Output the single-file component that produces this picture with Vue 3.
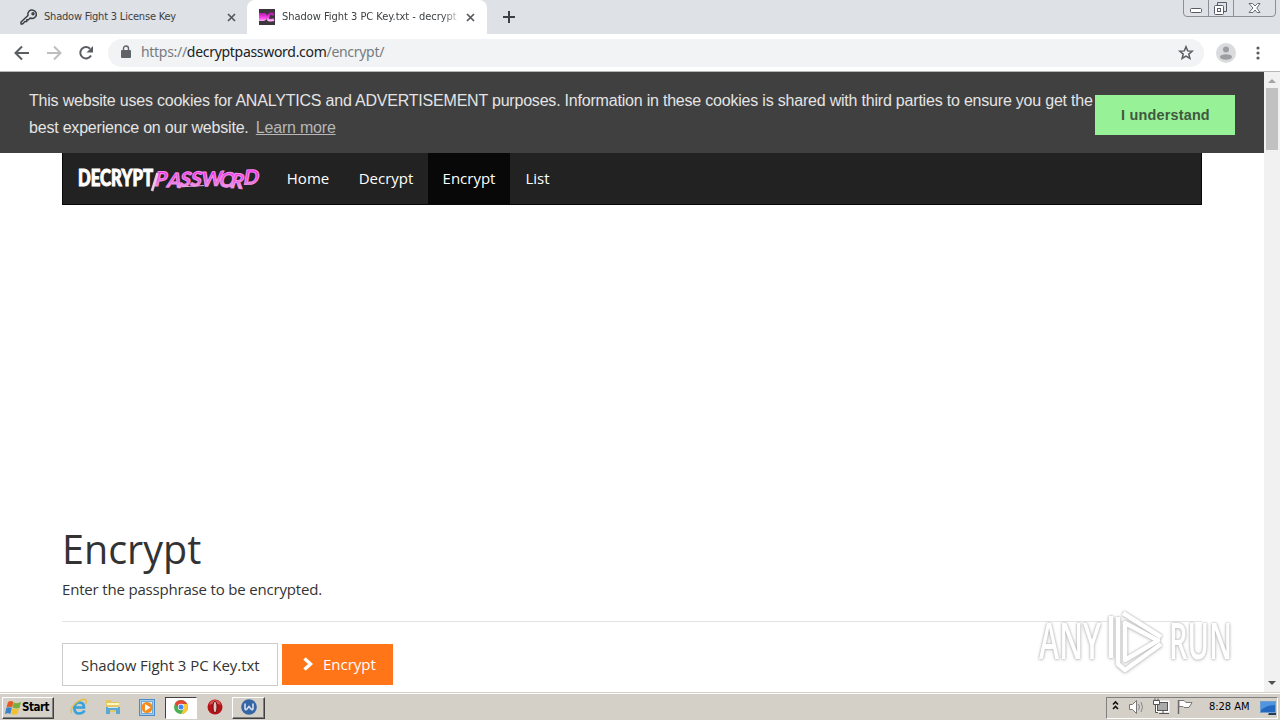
<script setup>
import { ref } from "vue";

const navItems = ["Home", "Decrypt", "Encrypt", "List"];
const active = ref("Encrypt");
const passphrase = ref("Shadow Fight 3 PC Key.txt");
</script>

<template>
  <div class="screen">
    <header class="tabstrip">
      <div class="tab first">
        <svg class="key" width="18" height="18" viewBox="0 0 18 18" fill="none" stroke="#3c4043" stroke-width="1.5">
          <path d="M8 7.5C7 4 10 1.500 13 2.200C16.500 3 17.500 7 15 9.200C13.500 10.600 11.500 10.700 10.200 10L8.500 11.700H6.800V13.500H5L2.500 16H1V14Z" stroke-linejoin="round" />
          <circle cx="13" cy="5.800" r="1" />
        </svg>
        <span class="tab-title t1">Shadow Fight 3 License Key</span>
        <svg class="close" width="9" height="9" viewBox="0 0 9 9"><path d="M1 1L8 8M8 1L1 8" stroke="#55585c" stroke-width="1.700" /></svg>
      </div>
      <div class="tab current">
        <svg class="fav" width="16" height="16" viewBox="0 0 16 16">
          <defs><linearGradient id="pink" x2="0" y2="1"><stop offset="0" stop-color="#b51bab" /><stop offset=".6" stop-color="#ff43ed" /><stop offset="1" stop-color="#ffb0f5" /></linearGradient></defs>
          <rect width="16" height="16" fill="#3d363d" />
          <path d="M0 4H5Q8 4 8 7.500T5 12H0Z" fill="url(#pink)" />
          <path d="M15 5.500Q10 3 9 8T15 10.500" fill="none" stroke="url(#pink)" stroke-width="2.600" />
        </svg>
        <span class="tab-title t2">Shadow Fight 3 PC Key.txt - decrypt</span>
        <svg class="close" width="9" height="9" viewBox="0 0 9 9"><path d="M1 1L8 8M8 1L1 8" stroke="#55585c" stroke-width="1.700" /></svg>
      </div>
      <svg class="plus" width="12" height="12" viewBox="0 0 12 12"><path d="M6 0V12M0 6H12" stroke="#3c4043" stroke-width="2" /></svg>
      <svg class="window-buttons" width="94" height="18" viewBox="0 0 94 18" fill="none">
        <path d="M.5 0V13Q.5 16.500 4 16.500H89Q92.500 16.500 92.500 13V0M25.500 0V16M50.500 0V16" stroke="#8b8f98" />
        <rect x="7.500" y="8.500" width="11" height="4" rx="1" fill="#fff" stroke="#565b66" />
        <path d="M34.500 5V2.500H43.500V11.500H41" stroke="#565b66" />
        <rect x="31.500" y="5.500" width="9" height="9" rx="1" fill="#fff" stroke="#565b66" />
        <rect x="34.500" y="8.500" width="3" height="3" stroke="#565b66" />
        <path d="M66 3.500H69.500L72 6L74.500 3.500H77L73.800 8L77 12.500H74L72 10L70 12.500H66L70 8Z" fill="#fff" stroke="#686d77" />
      </svg>
    </header>

    <div class="toolbar">
      <svg class="nav-icon" width="108" height="36" viewBox="0 0 108 36" fill="none" stroke-width="2">
        <path d="M29 18H16M22 11.500L15.500 18L22 24.500" stroke="#5a5d61" />
        <path d="M47 18H60M54 11.500L60.500 18L54 24.500" stroke="#bcbec0" />
        <path d="M91 20.500A5.700 5.700 0 1 1 90 13.700" stroke="#5a5d61" />
        <path d="M93 11V17.500H86.500Z" fill="#5a5d61" />
      </svg>
      <div class="omnibox">
        <svg class="lock" width="10" height="13" viewBox="0 0 10 13"><path d="M2.500 6V3.500A2.500 2.500 0 0 1 7.500 3.500V6" fill="none" stroke="#5f6368" stroke-width="1.400" /><rect y="5" width="10" height="8" rx="1" fill="#5f6368" /></svg>
        <span class="url">https://<b>decryptpassword.com</b>/encrypt/</span>
        <svg class="star" width="16" height="16" viewBox="0 0 16 16"><path d="M8 1.800L9.700 5.900L14.200 6.200L10.800 9.100L11.900 13.500L8 11.100L4.100 13.500L5.200 9.100L1.800 6.200L6.300 5.900Z" fill="none" stroke="#5a5d61" stroke-width="1.500" /></svg>
      </div>
      <svg class="profile" width="20" height="20" viewBox="0 0 20 20"><circle cx="10" cy="10" r="10" fill="#dadbdd" /><circle cx="10" cy="6.500" r="3" fill="#9b9da0" /><ellipse cx="10" cy="14" rx="6" ry="2.700" fill="#9b9da0" /></svg>
      <svg class="dots" width="4" height="14" viewBox="0 0 4 14" fill="#5a5d61"><circle cx="2" cy="2" r="1.600" /><circle cx="2" cy="7" r="1.600" /><circle cx="2" cy="12" r="1.600" /></svg>
    </div>

    <div class="viewport">
      <main class="page">
        <div class="cookies">
          <p>
            <span class="line l1">This website uses cookies for ANALYTICS and ADVERTISEMENT purposes. Information in these cookies is shared with third parties to ensure you get the</span>
            <span class="line l2">best experience on our website. <a>Learn more</a></span>
          </p>
          <button class="accept">I understand</button>
        </div>
        <nav class="navbar">
          <svg class="logo" width="182" height="28" viewBox="0 0 182 28">
            <defs><linearGradient id="neon" x2="0" y2="1"><stop offset=".25" stop-color="#ff24ef" /><stop offset=".6" stop-color="#ea5fdf" /><stop offset="1" stop-color="#eee" /></linearGradient></defs>
            <text x="1" y="21" textLength="75" lengthAdjust="spacingAndGlyphs" class="logo-a">DECRYPT</text>
            <text x="81 94 106 117 128 146 157 170" y="21 22 21 21.500 21.500 22 22.500 19.500" class="logo-b" transform="skewX(-12)" rotate="0 3 3 0 -3 0 5 -2">PASSWORD</text>
            <path d="M80.500 8L75 26" stroke="#e9c5e5" stroke-width="2.600" />
            <path d="M101 22L127 20.500" stroke="#e9a5e3" stroke-width="1.200" />
          </svg>
          <a v-for="item in navItems" :key="item" :class="['nav-link', item.toLowerCase(), { active: item === active }]" @click="active = item">{{ item }}</a>
        </nav>
        <section class="content">
          <h1>Encrypt</h1>
          <p class="lead">Enter the passphrase to be encrypted.</p>
          <hr />
          <form class="form" @submit.prevent>
            <input v-model="passphrase" type="text" spellcheck="false" />
            <button class="submit">
              <svg width="12" height="14" viewBox="0 0 12 14"><path d="M2.500 1.500L8.500 7L2.500 12.500" fill="none" stroke="#fff" stroke-width="3.400" /></svg>
              <span>Encrypt</span>
            </button>
          </form>
        </section>
      </main>
      <div class="scrollbar">
        <svg width="16" height="16" viewBox="0 0 16 16"><path d="M4 11L8 7L12 11Z" fill="#a3a3a3" /></svg>
        <div class="thumb"></div>
        <svg class="down" width="16" height="16" viewBox="0 0 16 16"><path d="M4 5L8 9L12 5Z" fill="#505050" /></svg>
      </div>
      <svg class="watermark" width="204" height="72" viewBox="0 0 204 72">
        <g class="mark">
          <text x="5" y="54" textLength="62" lengthAdjust="spacingAndGlyphs">ANY</text>
          <text x="135" y="54" textLength="63" lengthAdjust="spacingAndGlyphs">RUN</text>
          <path d="M77 11V53" />
          <path d="M84 12V59L91 65L127 39" />
          <path d="M89 8L127 32" />
          <path d="M91 18V55L124 35.500Z" />
        </g>
      </svg>
    </div>

    <footer class="taskbar">
      <button class="start">
        <svg width="17" height="16" viewBox="0 0 17 16">
          <path d="M3 2Q6 0 8.500 2L7 7.500Q4.500 6 1.500 7.500Z" fill="#e65a25" />
          <path d="M8.800 2.500Q12.500 4 16 2L14.500 8Q11 9 7.500 7.500Z" fill="#78ae3b" />
          <path d="M1.200 8Q4 6.500 6.800 8L5.300 14Q3 12.500 0 14Z" fill="#3a83c8" />
          <path d="M7.400 8.300Q10.500 10 14 8.500L12.500 14Q9.500 15.500 6.100 14Z" fill="#f5bf32" />
        </svg>
        <span>Start</span>
      </button>
      <div class="quick ie">
        <svg width="18" height="18" viewBox="0 0 18 18" fill="none"><path d="M4.500 9.500H14Q14 4.500 9.500 4.500T4.300 10Q4.500 15.500 9 15.500Q13 15.500 14.500 12.500" stroke="#36a3dc" stroke-width="2.700" /><path d="M2 15C-2 12 7 1 15 1.500C17.500 2 16 5 15.500 6" stroke="#e5be43" stroke-width="1.300" /></svg>
      </div>
      <div class="quick">
        <svg width="16" height="16" viewBox="0 0 16 16"><path d="M1 1H6L7 3H14V13H1Z" fill="#e4c765" /><path d="M2 4H14V6H2Z" fill="#fff6bf" /><path d="M1 8H15V15H11V11H5V15H1Z" fill="#5ba8d2" /><path d="M3 8H13V9H3Z" fill="#c6eafa" /></svg>
      </div>
      <div class="quick">
        <svg width="16" height="17" viewBox="0 0 16 17"><rect x=".5" y=".5" width="15" height="16" fill="#a8cbea" stroke="#4a8ccb" /><rect x="2.500" y="2.500" width="11" height="12" fill="#dcecf7" stroke="#74aad7" /><circle cx="8" cy="8.500" r="5.500" fill="#f68b1e" /><path d="M6 5L11.500 8.500L6 12Z" fill="#fff" /></svg>
      </div>
      <div class="quick pressed">
        <svg width="14" height="14" viewBox="0 0 14 14"><circle cx="7" cy="7" r="7" fill="#4caf50" /><path d="M1 3.500A7 7 0 0 1 13.200 4H7L4.500 8.500Z" fill="#e64435" /><path d="M7 4H13.200A7 7 0 0 1 7 14L10 8.500Z" fill="#fcc934" /><circle cx="7" cy="7" r="3.200" fill="#fff" /><circle cx="7" cy="7" r="2.500" fill="#4285f4" /></svg>
      </div>
      <div class="quick opera">
        <svg width="16" height="16" viewBox="0 0 16 16"><ellipse cx="8" cy="8" rx="7.500" ry="7.500" fill="#b51219" /><path d="M2 6Q3 1 8 1T14 6Q8 3 2 6" fill="#d84d4d" /><ellipse cx="8" cy="8" rx="2" ry="5.800" fill="#d8c8c4" stroke="#790b0e" /></svg>
      </div>
      <div class="quick raised">
        <svg width="16" height="16" viewBox="0 0 16 16"><circle cx="8" cy="8" r="7.800" fill="#3465a4" /><path d="M4 4.500V9.500Q4 11 5.500 10.500L8 7.500L10.500 10.500Q12 11 12 9.500V4.500" fill="none" stroke="#d5e0ee" stroke-width="1.600" /></svg>
      </div>
      <div class="tray">
        <svg class="tray-icons" width="88" height="20" viewBox="0 0 88 20" fill="none">
          <path d="M6 7.500L8.500 5L11 7.500M6 12L8.500 9.500L11 12" stroke="#111" stroke-width="1.600" />
          <path d="M22.500 7.500H25.500L29.500 3.500V16.500L25.500 12.500H22.500Z" fill="#fff" stroke="#777" />
          <path d="M31.500 7Q33.500 10 31.500 13M34 5Q37 10 34 15" stroke="#888" />
          <rect x="50" y="5" width="11" height="9" fill="#aaa" stroke="#fff" stroke-width="3" />
          <rect x="50.500" y="5.500" width="10" height="8" fill="#aaa" stroke="#555" />
          <path d="M52 16.500H62M56 14V16M48.500 8V15.500H51" stroke="#555" />
          <path d="M46.500 3.500H52.500V7.500H46.500ZM48 1.500V3.500M51 1.500V3.500" fill="#fff" stroke="#555" />
          <path d="M71.500 17V3" stroke="#666" stroke-width="1.400" />
          <path d="M72 3.500H77L79 5.500H85L82 10.500H77L76 9.500H72Z" fill="#fff" stroke="#777" />
        </svg>
        <span class="clock">8:28 AM</span>
        <svg class="desktop" width="16" height="14" viewBox="0 0 16 14"><rect x=".5" y=".5" width="15" height="11" fill="#2168be" stroke="#6e9fcf" /><path d="M1 1H15V4Q7 4 1 9Z" fill="#4f95df" /><path d="M9 12H16V14H8Z" fill="#243c59" /></svg>
      </div>
    </footer>
  </div>
</template>

<style>
body {
  margin: 0;
  overflow: hidden;
}
</style>

<style scoped>
.screen {
  width: 1280px;
  height: 720px;
  display: flex;
  flex-direction: column;
  background: #fff;
  font-family: "Open Sans", sans-serif;
}
.screen * {
  box-sizing: border-box;
}
svg {
  display: block;
  flex: none;
  overflow: visible;
}
button {
  border: 0;
  font: inherit;
}
.tabstrip {
  height: 34px;
  flex: none;
  background: #dee1e6;
  display: flex;
  align-items: center;
}
.tab {
  height: 34px;
  display: flex;
  align-items: center;
  flex: none;
}
.first {
  width: 247px;
  padding-left: 20px;
}
.current {
  width: 240px;
  background: #fff;
  border-radius: 8px 8px 0 0;
  padding-left: 12px;
}
.tab-title {
  font: 11px/16px "DejaVu Sans Condensed", "DejaVu Sans", sans-serif;
  color: #3c4043;
  white-space: nowrap;
}
.t1 {
  margin-left: 6px;
  width: 183px;
  letter-spacing: -0.2px;
}
.t2 {
  margin-left: 7px;
  width: 176px;
  letter-spacing: -0.03px;
  mask-image: linear-gradient(90deg, #000 160px, transparent 180px);
}
.current .close {
  margin-left: 8px;
}
.plus {
  margin-left: 16px;
}
.window-buttons {
  margin: 0 3px auto auto;
}
.toolbar {
  height: 38px;
  flex: none;
  display: flex;
  align-items: center;
  border-bottom: 1px solid #b5b6b6;
}
.omnibox {
  width: 1096px;
  height: 28px;
  border-radius: 14px;
  background: #f1f3f4;
  display: flex;
  align-items: center;
  padding: 0 10px 0 13px;
}
.lock {
  margin-top: -2px;
}
.url {
  margin: -2px 0 0 10px;
  font: 14px/20px "Noto Sans", sans-serif;
  letter-spacing: -0.3px;
  color: #777b80;
}
.url b {
  font-weight: normal;
  color: #202124;
}
.star {
  margin-left: auto;
}
.profile {
  margin-left: 12px;
}
.dots {
  margin-left: 20px;
}
.viewport {
  height: 620px;
  flex: none;
  display: flex;
  position: relative;
}
.page {
  width: 1264px;
}
.cookies {
  height: 81px;
  background: #404040;
  display: flex;
  align-items: center;
  font-family: "Liberation Sans", Arial, sans-serif;
}
.cookies p {
  width: 1066px;
  margin: 2px 0 0 29px;
  color: #e4e4e4;
  font-size: 16px;
  line-height: 27px;
  letter-spacing: -0.205px;
}
.line {
  display: block;
  white-space: nowrap;
}
.line a {
  margin-left: 3px;
  color: #b7b7b7;
  text-decoration: underline;
}
.accept {
  width: 140px;
  height: 40px;
  margin-top: 5px;
  padding: 0 0 0 1px;
  background: #97f197;
  color: #40583f;
  font: bold 14.4px "Liberation Sans", Arial, sans-serif;
  letter-spacing: 0.2px;
}
.navbar {
  margin-left: 62px;
  width: 1140px;
  height: 52px;
  background: #222;
  border: 1px solid #080808;
  border-top: 0;
  display: flex;
  align-items: center;
  padding-left: 14px;
}
.logo {
  margin-right: 13px;
}
.logo-a {
  font: 900 22px Lato, sans-serif;
  fill: #fff;
  stroke: #fff;
  stroke-width: 1px;
}
.logo-b {
  font: bold 20px Lato, sans-serif;
  fill: url(#neon);
  stroke: #f08ae8;
  stroke-width: 1.1px;
}
.nav-link {
  height: 51px;
  line-height: 51px;
  font-size: 15px;
  color: #fff;
  text-align: center;
}
.home {
  width: 72px;
}
.decrypt {
  width: 84px;
}
.encrypt {
  width: 82px;
}
.list {
  width: 55px;
}
.active {
  background: #080808;
}
.content {
  margin-left: 62px;
  padding-top: 319px;
}
h1 {
  margin: 0;
  font-size: 39.5px;
  line-height: 50px;
  font-weight: normal;
  color: #333;
}
.lead {
  margin: 5px 0 0;
  font-size: 15px;
  line-height: 20px;
  letter-spacing: -0.18px;
  color: #333;
}
hr {
  margin: 22px 0 21px;
  width: 1140px;
  border: 0;
  border-top: 1px solid #e3e3e3;
}
.form {
  display: flex;
  gap: 4px;
}
.form input {
  width: 216px;
  height: 43px;
  border: 1px solid #ccc;
  padding: 0 0 0 18px;
  font: 15px "Open Sans", sans-serif;
  letter-spacing: -0.06px;
  color: #333;
  outline: 0;
}
.submit {
  width: 111px;
  height: 41px;
  margin-top: 1px;
  padding: 0 0 1px 20px;
  background: #ff7518;
  color: #fff;
  font-size: 15px;
  display: flex;
  align-items: center;
}
.submit span {
  margin: -1px 0 0 9px;
}
.scrollbar {
  width: 16px;
  background: #f1f1f1;
  display: flex;
  flex-direction: column;
  align-items: center;
}
.thumb {
  width: 12px;
  height: 62px;
  background: #c1c1c1;
}
.down {
  margin-top: auto;
}
.watermark {
  position: absolute;
  left: 1034px;
  top: 533px;
}
.mark {
  fill: #fff;
  filter: drop-shadow(0 0 1.2px #aaa) drop-shadow(0 1px 1.5px #ddd);
}
.mark path {
  fill: none;
  stroke: #fff;
  stroke-width: 4.5px;
  stroke-linejoin: round;
}
.mark text {
  font: 600 51px "Open Sans", sans-serif;
}
.taskbar {
  height: 28px;
  background: #d4d0c8;
  border-top: 1px solid #d4d0c8;
  box-shadow: inset 0 1px #fff;
  display: flex;
  align-items: center;
  padding: 2px 2px 0;
}
.start {
  width: 52px;
  height: 22px;
  padding: 0 0 0 2px;
  display: flex;
  align-items: center;
  background: #d4d0c8;
  border: 1px solid;
  border-color: #fff #404040 #404040 #fff;
  box-shadow: inset -1px -1px #808080;
  font: bold 11.5px "DejaVu Sans Condensed", "DejaVu Sans", sans-serif;
  letter-spacing: -0.5px;
}
.start span {
  margin-top: -2px;
}
.quick {
  width: 34px;
  height: 22px;
  display: flex;
  align-items: center;
  justify-content: center;
}
.quick svg {
  margin-top: -1px;
}
.ie {
  margin-left: 8px;
}
.pressed {
  width: 32px;
  margin-left: 1px;
  background: #fff;
  border: 1px solid;
  border-color: #404040 #fff #fff #404040;
}
.opera {
  width: 35px;
}
.raised {
  width: 33px;
  border: 1px solid;
  border-color: #fff #404040 #404040 #fff;
  box-shadow: inset -1px -1px #808080;
}
.tray {
  margin-left: auto;
  width: 172px;
  height: 22px;
  border: 1px solid;
  border-color: #808080 #fff #fff #808080;
  display: flex;
  align-items: center;
}
.tray-icons {
  margin: -2px 0 0;
}
.clock {
  width: 51px;
  margin: -2px 0 0 14px;
  font: 11px/16px "DejaVu Sans Condensed", "DejaVu Sans", sans-serif;
  letter-spacing: -0.02px;
  white-space: nowrap;
}
</style>
